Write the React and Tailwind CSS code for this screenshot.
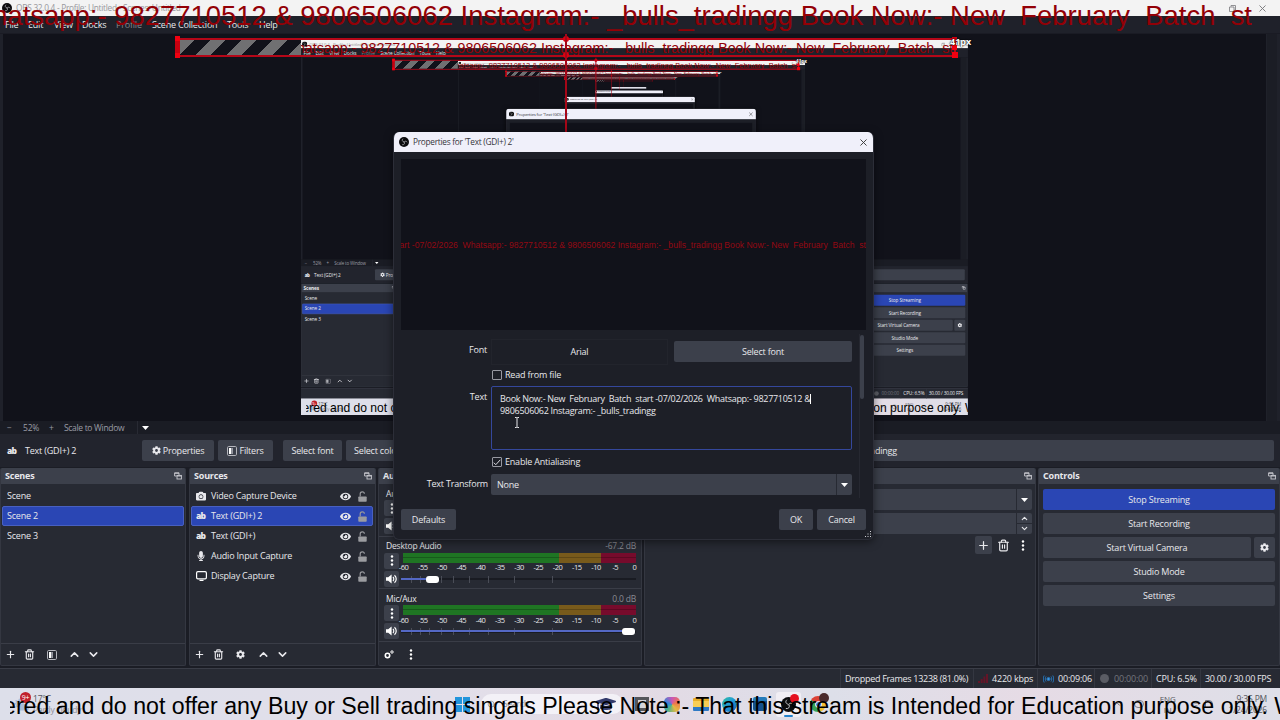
import React from "react";
import { ChevronDown, ChevronUp, Plus, Search, Trash2, Wifi, X } from "lucide-react";
import { FaCamera, FaCog, FaMicrophone, FaEye, FaCloudSun, FaGraduationCap } from "react-icons/fa";

const MAX_DEPTH = 4;

const sources = [
  { name: "Video Capture Device", icon: "camera" },
  { name: "Text (GDI+) 2", icon: "text", selected: true },
  { name: "Text (GDI+)", icon: "text" },
  { name: "Audio Input Capture", icon: "mic" },
  { name: "Display Capture", icon: "display" },
];

const ticks = [-60, -55, -50, -45, -40, -35, -30, -25, -20, -15, -10, -5, 0];
const sliderMarks = [10, 19, 28, 40, 52, 68, 87, 113, 151];

function ObsLogo({ className }) {
  return (
    <svg className={className} viewBox="0 0 20 20">
      <circle cx="10" cy="10" r="10" fill="#0b0b0d" />
      <g fill="none" stroke="#c8c8ce" strokeWidth="1.3" strokeLinecap="round">
        <path d="M7.500 4c-2 2-1.300 5 1.700 5.600" />
        <path d="M16 10c-1.800-2.500-5-2.300-6 .5" />
        <path d="M7 15.500c3 .5 5-1.800 4-4.500" />
      </g>
    </svg>
  );
}

function Dots() {
  return (
    <svg className="h-[11px] w-[4px] shrink-0" viewBox="0 0 4 11" fill="#fff">
      <circle cx="2" cy="1.500" r="1.200" />
      <circle cx="2" cy="5.500" r="1.200" />
      <circle cx="2" cy="9.500" r="1.200" />
    </svg>
  );
}

function Caret() {
  return (
    <svg className="h-[4px] w-[7px] shrink-0" viewBox="0 0 7 4" fill="#fff">
      <path d="M0 0h7L3.500 4z" />
    </svg>
  );
}

function Filters() {
  return (
    <svg className="h-[10px] w-[10px] shrink-0" viewBox="0 0 10 10">
      <rect x=".5" y=".5" width="9" height="9" rx="1.200" fill="none" stroke="#b5b6bd" />
      <path d="M2 2h2.200v6H2z" fill="#fff" />
      <path d="M4.200 2H6v6H4.200z" fill="#9698a1" />
    </svg>
  );
}

function Lock() {
  return (
    <svg className="h-[11px] w-[9px] shrink-0" viewBox="0 0 9 11">
      <path d="M2.200 5.500V3a2 2 0 0 1 4.200-.2" fill="none" stroke="#96979c" strokeWidth="1.200" />
      <rect x=".3" y="5.500" width="8.400" height="5.300" rx=".7" fill="#9b9ca0" />
    </svg>
  );
}

function Speaker() {
  return (
    <svg className="h-[10px] w-[12px]" viewBox="0 0 12 10" fill="#fff">
      <path d="M0 3.200h2.200L5.600.4v9.200L2.200 6.800H0z" />
      <path d="M7 3c1 1 1 3 0 4M8.500 1.200c2.300 2 2.300 5.600 0 7.600" fill="none" stroke="#fff" strokeWidth="1.200" />
    </svg>
  );
}

function Popout() {
  return (
    <svg className="h-[8px] w-[8px]" viewBox="0 0 8 8" fill="none" stroke="#c9cad0" strokeWidth=".9">
      <path d="M5 3V.8H.6V4H2.600" />
      <rect x="3" y="3.400" width="4.400" height="3.600" />
      <path d="M.6 1.300H5M3 4h4.400" />
    </svg>
  );
}

function Gears() {
  return (
    <svg className="h-[9px] w-[10px]" viewBox="0 0 10 9" fill="none" stroke="#fff">
      <circle cx="3.500" cy="5.500" r="2.200" strokeWidth="1.600" />
      <circle cx="8" cy="2" r="1.200" strokeWidth="1" />
    </svg>
  );
}

function SourceIcon({ type }) {
  if (type === "camera") return <FaCamera className="h-[10px] w-[10px]" />;
  if (type === "mic") return <FaMicrophone className="h-[10px] w-[10px]" />;
  if (type === "display") {
    return (
      <svg className="h-[10px] w-[11px]" viewBox="0 0 11 10" fill="none" stroke="#fff" strokeWidth="1.200">
        <rect x=".6" y=".6" width="9.800" height="7.300" rx="1.300" />
        <path d="M3.500 9.300h4" />
      </svg>
    );
  }
  return <span className="text-[8.500px] font-extrabold tracking-[-0.7px]">ab</span>;
}

function Button({ className = "", children }) {
  return (
    <div className={`flex h-[21px] shrink-0 items-center justify-center rounded-[2px] bg-[#3c404b] ${className}`}>
      {children}
    </div>
  );
}

function Dock({ title, className, children }) {
  return (
    <section className={`flex shrink-0 flex-col overflow-hidden rounded-[2px] border border-t-0 border-[#343741] bg-[#272a33] ${className}`}>
      <header className="flex h-[16px] shrink-0 items-center justify-between bg-[#3c404b] pr-[3px] pl-[4px] font-bold">
        <span className="whitespace-nowrap">{title}</span>
        <Popout />
      </header>
      {children}
    </section>
  );
}

function MenuBar() {
  return (
    <nav className="flex h-[17px] items-center bg-[#1f212a] pl-[5px]">
      <span className="w-[23px]">File</span>
      <span className="w-[26px]">Edit</span>
      <span className="w-[28px]">View</span>
      <span className="w-[34px]">Docks</span>
      <span className="w-[36px] text-[#85868c]">Profile</span>
      <span className="w-[75px]">Scene Collection</span>
      <span className="w-[32px]">Tools</span>
      <span>Help</span>
    </nav>
  );
}

function Preview({ depth }) {
  return (
    <div className="flex h-[388px] border-t border-[#1a1b24] bg-[#1f212a] pl-[3px]">
      <div className="relative flex w-[1263px] items-center justify-center bg-[#11121a]">
        <div className="h-[375px] w-[667px] overflow-hidden">
          <div className="h-[720px] w-[1280px] origin-top-left scale-[0.521]">
            {depth < MAX_DEPTH && <Screen depth={depth + 1} />}
          </div>
        </div>
        {/* selected source outline */}
        <div className="absolute top-[4px] left-[174px] h-[19px] w-[779px] border-2 border-[#b50718]">
          <div className="h-full w-[122px] bg-[repeating-linear-gradient(135deg,#707072_0px,#707072_11px,#11121a_11px,#11121a_22px)]" />
          <i className="absolute -top-[4px] -left-[4px] h-[22px] w-[5px] border-y-[5px] border-[#f00010] bg-[#c80010]" />
          <i className="absolute -top-[3px] -right-[3px] h-[5px] w-[5px] bg-[#d00010]" />
          <i className="absolute top-[5px] -right-[3px] h-[5px] w-[5px] bg-[#f00010]" />
          <i className="absolute -right-[4px] -bottom-[3px] h-[6px] w-[6px] bg-[#f00010]" />
          <i className="absolute -top-[4px] left-[384px] h-[6px] w-[6px] rounded-full bg-[#e00010]" />
          <i className="absolute -bottom-[3px] left-[384px] h-[6px] w-[6px] rounded-full bg-[#e00010]" />
        </div>
        <i className="absolute top-0 left-[562px] h-[240px] w-[2px] bg-[#a50718]" />
        <span className="absolute top-[2px] left-[947px] text-[9px] font-bold tracking-normal text-white [text-shadow:0_0_2px_#000,0_0_1px_#000]">
          41px
        </span>
      </div>
      <div className="ml-px w-[10px] bg-[#1b1d25]" />
    </div>
  );
}

function ZoomBar() {
  return (
    <div className="flex h-[13px] items-center bg-[#1a1c24] text-[8.500px] text-[#9b9ca4]">
      <span className="w-[23px] pl-[7px]">−</span>
      <span className="w-[26px]">52%</span>
      <span className="w-[15px]">+</span>
      <span className="w-[73px] tracking-[-0.320px] whitespace-nowrap">Scale to Window</span>
      <span className="flex h-full items-center border-l border-[#282a33] pl-[4px]">
        <Caret />
      </span>
    </div>
  );
}

function ContextBar() {
  return (
    <div className="flex h-[33px] items-center bg-[#22242d]">
      <span className="ml-[7px] w-[18px] text-[8.500px] font-extrabold tracking-[-0.7px]">ab</span>
      <span className="w-[117px]">Text (GDI+) 2</span>
      <Button className="w-[72px] gap-[2px]">
        <FaCog className="h-[9px] w-[9px]" />
        Properties
      </Button>
      <Button className="ml-[4px] w-[55px] gap-[2px]">
        <Filters />
        Filters
      </Button>
      <Button className="ml-[10px] w-[59px]">Select font</Button>
      <Button className="ml-[4px] w-[62px]">Select color</Button>
      <div className="ml-[8px] flex h-[21px] w-[858px] items-center rounded-[2px] bg-[#3c404b]">
        <span className="w-[481px] text-right">9806506062 Instagram:- _bulls_tradingg</span>
      </div>
    </div>
  );
}

function ListToolbar({ third }) {
  return (
    <div className="mt-auto flex h-[22px] items-center border-t border-[#3a3d47] pl-[4px]">
      <Plus className="h-[11px] w-[11px]" strokeWidth={2.500} />
      <Trash2 className="ml-[8px] h-[11px] w-[11px]" strokeWidth={2.500} />
      <span className="ml-[12px] flex w-[10px]">{third}</span>
      <ChevronUp className="ml-[11px] h-[13px] w-[13px]" strokeWidth={2.800} />
      <ChevronDown className="ml-[6px] h-[13px] w-[13px]" strokeWidth={2.800} />
    </div>
  );
}

function ScenesDock() {
  return (
    <Dock title="Scenes" className="w-[186px]">
      <ul className="px-px pt-[2px]">
        {["Scene", "Scene 2", "Scene 3"].map((name) => (
          <li
            key={name}
            className={`flex h-[20px] items-center rounded-[2px] border pl-[4px] ${
              name === "Scene 2" ? "border-[#4860c0] bg-[#2a46b4]" : "border-transparent"
            }`}
          >
            {name}
          </li>
        ))}
      </ul>
      <ListToolbar third={<Filters />} />
    </Dock>
  );
}

function SourcesDock() {
  return (
    <Dock title="Sources" className="ml-px w-[187px]">
      <ul className="pt-[2px] pr-[2px] pl-px">
        {sources.map((source) => (
          <li
            key={source.name}
            className={`flex h-[20px] items-center rounded-[2px] border pr-[5px] pl-[4px] ${
              source.selected ? "border-[#4860c0] bg-[#2a46b4]" : "border-transparent"
            }`}
          >
            <span className="flex w-[15px] items-center">
              <SourceIcon type={source.icon} />
            </span>
            <span className="flex-1">{source.name}</span>
            <FaEye className="mr-[7px] h-[11px] w-[11px]" />
            <Lock />
          </li>
        ))}
      </ul>
      <ListToolbar third={<FaCog className="h-[9px] w-[9px]" />} />
    </Dock>
  );
}

function Channel({ name, level, volume }) {
  return (
    <div className="h-[52.600px] shrink-0 border-b border-[#3a3d47] px-[5px] pt-[3px]">
      <div className="flex h-[13px] items-center justify-between pl-[2px] text-[8.500px]">
        <span>{name}</span>
        <span className="text-[#8b8c93]">{level}</span>
      </div>
      <div className="flex">
        <div className="flex w-[15px] flex-col gap-[2px]">
          <Button className="h-[16px]!">
            <Dots />
          </Button>
          <Button className="h-[16px]!">
            <Speaker />
          </Button>
        </div>
        <div className="ml-[2px] flex-1">
          <div className="ml-[2px] flex h-[10px]">
            <i className="h-full w-[156px] bg-[linear-gradient(#1f7523_45%,#175a1c_45%,#175a1c_55%,#1f7523_55%)]" />
            <i className="h-full w-[42px] bg-[linear-gradient(#785a1b_45%,#5e4716_45%,#5e4716_55%,#785a1b_55%)]" />
            <i className="h-full flex-1 bg-[linear-gradient(#760b2c_45%,#5c0822_45%,#5c0822_55%,#760b2c_55%)]" />
          </div>
          <div className="-mr-[5px] -ml-[4px] flex h-[9px] items-center justify-between text-[7.500px] tracking-[-0.5px]">
            {ticks.map((tick) => (
              <span key={tick} className="w-[13px] text-center">
                {tick}
              </span>
            ))}
          </div>
          <div className="relative mt-px flex h-[13px] items-center">
            <i className="h-[2px] w-full bg-[#191b22]" />
            {sliderMarks.map((mark) => (
              <i key={mark} className="absolute top-[3px] h-[7px] w-px bg-[#4a4d57]" style={{ left: mark }} />
            ))}
            <i className="absolute top-[5px] left-0 h-[2px] bg-[#5468c5]" style={{ width: volume }} />
            <i className="absolute top-[3px] h-[7px] w-[13px] rounded-[3px] bg-white" style={{ left: volume }} />
          </div>
        </div>
      </div>
    </div>
  );
}

function MixerDock() {
  return (
    <Dock title="Audio Mixer" className="w-[264px]">
      <Channel name="Audio Input Capture" level="0.0 dB" volume={221} />
      <Channel name="Desktop Audio" level="-67.2 dB" volume={25} />
      <Channel name="Mic/Aux" level="0.0 dB" volume={221} />
      <div className="mt-auto flex h-[21px] items-center pl-[5px]">
        <Gears />
        <span className="ml-[15px] flex">
          <Dots />
        </span>
      </div>
    </Dock>
  );
}

function TransitionsDock() {
  return (
    <Dock title="Scene Transitions" className="w-[392px]">
      <div className="flex flex-col gap-[3px] px-[3px] pt-[5px]">
        <Button className="justify-end!">
          <span className="flex h-full w-[16px] items-center justify-center border-l border-[#272a33]">
            <Caret />
          </span>
        </Button>
        <Button className="justify-end!">
          <span className="flex h-full w-[16px] flex-col items-center justify-between border-l border-[#272a33] py-px">
            <ChevronUp className="h-[9px] w-[9px]" strokeWidth={3} />
            <i className="h-px w-full bg-[#272a33]" />
            <ChevronDown className="h-[9px] w-[9px]" strokeWidth={3} />
          </span>
        </Button>
      </div>
      <div className="mt-[2px] flex items-center justify-end pr-[10px]">
        <Button className="h-[18px]! w-[17px]">
          <Plus className="h-[13px] w-[13px]" strokeWidth={2.300} />
        </Button>
        <Trash2 className="mr-[11px] ml-[5px] h-[13px] w-[13px]" strokeWidth={2.200} />
        <Dots />
      </div>
    </Dock>
  );
}

function ControlsDock() {
  return (
    <Dock title="Controls" className="w-[242px]">
      <div className="flex flex-col gap-[3px] pt-[5px] pr-[4px] pl-[4px]">
        <Button className="bg-[#2a46b4]!">Stop Streaming</Button>
        <Button>Start Recording</Button>
        <div className="flex gap-[3px]">
          <Button className="w-[208px]">Start Virtual Camera</Button>
          <Button className="flex-1">
            <FaCog className="h-[9px] w-[9px]" />
          </Button>
        </div>
        <Button>Studio Mode</Button>
        <Button>Settings</Button>
      </div>
    </Dock>
  );
}

function StatusBar() {
  return (
    <footer className="flex h-[20px] items-center border-t border-[#3a3d47] bg-[#272a33] pl-[840px] whitespace-nowrap">
      <span className="flex h-full w-[133px] items-center border-l border-[#343741] pl-[4px] tracking-[-0.300px]">
        Dropped Frames 13238 (81.0%)
      </span>
      <span className="flex h-full w-[64px] items-center border-l border-[#343741] pl-[4px]">
        <svg className="mr-[4px] h-[9px] w-[10px]" viewBox="0 0 10 9" fill="#641528">
          <path d="M0 7h2v2H0zM2.700 5h2v4h-2zM5.400 2.500h2V9h-2zM8 0h2v9H8z" />
        </svg>
        4220 kbps
      </span>
      <span className="flex h-full w-[57px] items-center border-l border-[#343741] pl-[5px]">
        <svg className="mr-[4px] h-[8px] w-[11px]" viewBox="0 0 11 8" fill="none" stroke="#2672b4">
          <circle cx="5.500" cy="4" r="1.600" fill="#3d96df" />
          <path d="M3 1.500c-1 1.500-1 3.500 0 5M8 1.500c1 1.500 1 3.500 0 5M1.200.5c-1.200 2-1.200 5 0 7M9.800.5c1.200 2 1.200 5 0 7" />
        </svg>
        00:09:06
      </span>
      <span className="flex h-full w-[57px] items-center border-l border-[#343741] pl-[5px] text-[#74767e]">
        <i className="mr-[5px] h-[9px] w-[9px] rounded-full bg-[#5a5c64]" />
        00:00:00
      </span>
      <span className="flex h-full w-[49px] items-center border-l border-[#343741] pl-[4px]">CPU: 6.5%</span>
      <span className="flex h-full items-center border-l border-[#343741] pl-[4px] tracking-[-0.300px]">
        30.00 / 30.00 FPS
      </span>
    </footer>
  );
}

function Checkbox({ checked, label }) {
  return (
    <div className="flex h-[10px] items-center gap-[3px]">
      <span className="flex h-[10px] w-[10px] items-center justify-center rounded-[1px] border border-[#9899a2]">
        {checked && (
          <svg className="h-[7px] w-[8px]" viewBox="0 0 8 7" fill="none" stroke="#e0e0e6">
            <path d="M.8 3.700l2 2L7.300.8" />
          </svg>
        )}
      </span>
      {label}
    </div>
  );
}

function PropertiesDialog() {
  return (
    <div className="absolute top-[132px] left-[393px] flex h-[408px] w-[481px] flex-col overflow-hidden rounded-[6px] border border-t-0 border-[#2c2e38] bg-[#1d1f27] shadow-[0_2px_8px_rgba(0,0,0,0.5)]">
      <div className="-mx-px flex h-[20px] shrink-0 items-center bg-[#f0f0fa] px-[5px] text-[8.300px] tracking-[-0.280px] text-[#35353b]">
        <ObsLogo className="mr-[4px] ml-px h-[10px] w-[10px]" />
        Properties for 'Text (GDI+) 2'
        <X className="ml-auto h-[11px] w-[11px] text-[#333]" strokeWidth={2} />
      </div>
      <div className="mt-[7px] ml-[7px] flex h-[171px] w-[465px] shrink-0 items-center justify-end overflow-hidden bg-[#11121a] font-['Liberation_Sans',sans-serif] text-[8.620px] tracking-normal whitespace-pre text-[#930812]">
        {"tart -07/02/2026  Whatsapp:- 9827710512 & 9806506062 Instagram:- _bulls_tradingg Book Now:- New  February  Batch  st"}
      </div>
      <div className="flex h-[170px] pt-[4px]">
        <div className="flex w-[459px] flex-col">
          <div className="flex h-[33px]">
            <span className="w-[93px] pt-[10px] text-right">Font</span>
            <div className="mt-[5px] ml-[4px] flex h-[26px] w-[177px] items-center justify-center border border-[#22242c]">
              Arial
            </div>
            <Button className="mt-[7px] ml-[6px] w-[178px]">Select font</Button>
          </div>
          <div className="mt-[3px] pl-[98px]">
            <Checkbox label="Read from file" />
          </div>
          <div className="mt-[6px] flex">
            <span className="w-[93px] pt-[5px] text-right">Text</span>
            <div className="ml-[4px] h-[64px] w-[361px] rounded-[2px] border border-[#34479c] pt-[6px] pl-[8px] leading-[12px] tracking-[-0.290px] whitespace-pre">
              Book Now:- New{"  "}February{"  "}Batch{"  "}start -07/02/2026{"  "}Whatsapp:- 9827710512 &
              <i className="-mt-[2px] inline-block h-[10px] w-px bg-white align-middle" />
              {"\n"}9806506062 Instagram:- _bulls_tradingg
            </div>
          </div>
          <div className="mt-[7px] pl-[98px]">
            <Checkbox checked label="Enable Antialiasing" />
          </div>
          <div className="mt-[7px] flex">
            <span className="w-[94px] pt-[4px] text-right whitespace-nowrap">Text Transform</span>
            <div className="ml-[3px] flex h-[21px] w-[361px] items-center rounded-[2px] bg-[#3c404b] pl-[6px]">
              <span className="flex-1">None</span>
              <span className="flex h-full w-[16px] items-center justify-center border-l border-[#272a33]">
                <Caret />
              </span>
            </div>
          </div>
        </div>
        <div className="ml-[6px] h-[164px] border-l border-[#262831]">
          <i className="mt-px block h-[64px] w-[4px] rounded-[2px] bg-[#3c404b]" />
        </div>
      </div>
      <div className="mt-[9px] flex gap-[4px] pr-[7px] pl-[7px]">
        <Button className="w-[55px]">Defaults</Button>
        <Button className="ml-auto w-[34px]">OK</Button>
        <Button className="w-[49px]">Cancel</Button>
      </div>
      <svg className="absolute right-[2px] bottom-[2px] h-[6px] w-[6px]" viewBox="0 0 6 6" fill="#d0d1d6">
        <path d="M5 0h1v1H5zM5 2.500h1v1H5zM5 5h1v1H5zM2.500 2.500h1v1h-1zM2.500 5h1v1h-1zM0 5h1v1H0z" />
      </svg>
      <svg className="absolute top-[285px] left-[120px] h-[11px] w-[6px]" viewBox="0 0 6 11" fill="none" stroke="#e8e8ec">
        <path d="M1 .5h1.500l.5.500.5-.5H5M3 1v9M1 10.500h1.500l.5-.5.5.500H5" />
      </svg>
    </div>
  );
}

function Taskbar() {
  return (
    <div className="flex h-[32px] items-center bg-[linear-gradient(90deg,#dddfea,#e2dfea_35%,#e3dae4_50%,#dddfe9_65%,#e6dbe5_80%,#dedfe8)] text-[8.500px] text-[#55565e]">
      <div className="relative flex w-[455px] items-center pl-[14px]">
        <FaCloudSun className="h-[15px] w-[15px] text-[#a9bbd8]" />
        <span className="absolute -top-[1px] left-[20px] flex h-[11px] w-[11px] items-center justify-center rounded-full bg-[#c0202b] text-[7px] text-white">
          9+
        </span>
        <div className="ml-[4px] leading-[11px]">
          <div>17°C</div>
          <div className="text-[#90919b]">Partly cloudy</div>
        </div>
      </div>
      <svg className="h-[15px] w-[15px]" viewBox="0 0 15 15" fill="#2295db">
        <path d="M0 0h7v7H0zM8 0h7v7H8zM0 8h7v7H0zM8 8h7v7H8z" />
      </svg>
      <div className="ml-[11px] flex h-[20px] w-[142px] items-center rounded-full bg-[#f3f1f7] pl-[6px] text-[#8c8c94]">
        <Search className="mr-[7px] h-[9px] w-[9px]" />
        <span className="flex-1">Search</span>
        <FaGraduationCap className="mr-[7px] h-[16px] w-[20px] text-[#343b6c]" />
      </div>
      <div className="ml-[12px] flex h-[14px] w-[14px] bg-[#55565b] p-[3px]">
        <i className="flex-1 bg-[#d5d5db]" />
      </div>
      <i className="ml-[15px] h-[15px] w-[16px] rounded-[5px] bg-[conic-gradient(#ca55b7,#ef794d,#e4b943,#4fb28a,#3489d8,#ca55b7)]" />
      <i className="ml-[13px] h-[13px] w-[16px] rounded-[1px] bg-[linear-gradient(#e5ad28_20%,#f8cd54_20%,#f8cd54_70%,#2e79c4_70%)]" />
      <i className="ml-[13px] h-[15px] w-[15px] rounded-full bg-[linear-gradient(135deg,#31bea0,#209ad8_50%,#1759a8)]" />
      <i className="ml-[16px] h-[14px] w-[14px] rounded-[2px] border-t-4 border-[#257bb9] bg-[#15518e]" />
      <div className="relative ml-[9px] flex h-[25px] w-[25px] items-center justify-center rounded-[3px] bg-[#f1eef4]">
        <ObsLogo className="h-[15px] w-[15px]" />
        <i className="absolute top-[2px] right-[2px] h-[9px] w-[9px] rounded-full bg-[#e5101f]" />
        <i className="absolute bottom-0 left-[8px] h-[2px] w-[9px] rounded-full bg-[#2482cc]" />
      </div>
      <div className="relative ml-[9px] flex h-[16px] w-[16px] items-center justify-center rounded-full bg-[conic-gradient(from_-60deg,#dc4236_0_120deg,#f2be32_120deg_240deg,#36a258_240deg)]">
        <i className="h-[7px] w-[7px] rounded-full border border-white bg-[#3f7fe0]" />
        <i className="absolute -top-[3px] -right-[3px] h-[10px] w-[10px] rounded-full bg-[#4a2a2c]" />
      </div>
      <div className="ml-auto flex items-center pr-[13px]">
        <ChevronUp className="mr-[12px] h-[10px] w-[10px]" />
        <span className="mr-[16px] h-[8px] w-[10px] rounded-[4px] border border-[#80818a]" />
        <span className="mr-[15px] text-center text-[8px] leading-[11px]">
          ENG
          <br />
          IN
        </span>
        <Wifi className="mr-[4px] h-[10px] w-[10px] text-[#90919b]" />
        <span className="mr-[16px] h-[8px] w-[8px] rounded-r-full border border-[#75767e]" />
        <span className="text-right leading-[11px]">
          9:35 PM
          <br />
          1/24/2026
        </span>
      </div>
    </div>
  );
}

function Tickers() {
  return (
    <>
      <div className="absolute top-0 left-0 flex h-[32px] w-[1252px] items-center justify-end overflow-hidden font-['Liberation_Sans',sans-serif] text-[27.450px] leading-[32px] tracking-normal whitespace-pre text-[#930006]">
        {"Whatsapp:- 9827710512 & 9806506062 Instagram:- _bulls_tradingg Book Now:- New  February  Batch  st"}
      </div>
      <div className="absolute top-[692px] left-[10px] h-[28px] w-[1270px] overflow-hidden font-['Liberation_Sans',sans-serif] text-[23.180px] leading-[28px] tracking-normal whitespace-pre text-black">
        <span className="-ml-[7px]">
          ered and do not offer any Buy or Sell trading singals Please Note :- That this stream is Intended for Education purpose only. We
        </span>
      </div>
    </>
  );
}

function Screen({ depth }) {
  return (
    <div className="relative h-[720px] w-[1280px] overflow-hidden bg-[#1b1d25] font-['Open_Sans','Noto_Sans',sans-serif] text-[9px] leading-[12px] tracking-[-0.200px] text-[#e8e8ec]">
      <div className="flex h-[16px] items-center bg-[#f3f3f3] pr-[12px] pl-[2px] text-[8.300px] tracking-[-0.280px] text-[#98989c]">
        <ObsLogo className="mr-[4px] h-[10px] w-[10px]" />
        OBS 32.0.4 - Profile: Untitled - Scenes: Untitled
        <svg className="ml-auto h-[7px] w-[7px]" viewBox="0 0 7 7" fill="none" stroke="#77777b" strokeWidth=".8">
          <path d="M2 1.500V.5h4.500V5h-1M.5 2h4.500v4.500H.5z" />
        </svg>
        <X className="ml-[21px] h-[11px] w-[11px] text-[#77777b]" strokeWidth={2} />
      </div>
      <MenuBar />
      <Preview depth={depth} />
      <ZoomBar />
      <ContextBar />
      <main className="mt-px flex h-[198px] gap-[2px]">
        <ScenesDock />
        <SourcesDock />
        <MixerDock />
        <TransitionsDock />
        <ControlsDock />
      </main>
      <div className="h-[2px]" />
      <StatusBar />
      <Taskbar />
      <PropertiesDialog />
      <Tickers />
    </div>
  );
}

export default function App() {
  return <Screen depth={0} />;
}
